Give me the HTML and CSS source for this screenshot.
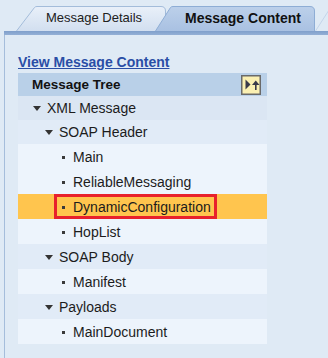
FILE: index.html
```html
<!DOCTYPE html>
<html>
<head>
<meta charset="utf-8">
<link rel="stylesheet" href="styles.css">
</head>
<body>
<div class="tabs">
  <div class="tab tab-details">
    <svg class="tab-bg" width="150" height="25" viewBox="0 0 150 25">
      <defs>
        <linearGradient id="gd" x1="0" y1="0" x2="0" y2="1">
          <stop offset="0" stop-color="#e9f0f9"/>
          <stop offset="1" stop-color="#d2dff0"/>
        </linearGradient>
      </defs>
      <path d="M0.5,25 L18.5,1.5 Q19.3,0.5 21,0.5 L145,0.5 Q149.5,0.5 149.5,5 L149.5,25" fill="url(#gd)" stroke="#a3bcda" stroke-width="1"/>
    </svg>
    <span class="tab-label">Message Details</span>
  </div>
  <div class="tab tab-content">
    <svg class="tab-bg" width="160" height="25" viewBox="0 0 160 25">
      <defs>
        <linearGradient id="gc" x1="0" y1="0" x2="0" y2="1">
          <stop offset="0" stop-color="#bcd0ea"/>
          <stop offset="1" stop-color="#a9c1e2"/>
        </linearGradient>
      </defs>
      <path d="M0.5,25 L15.5,1.5 Q16.3,0.5 18,0.5 L155,0.5 Q159.5,0.5 159.5,5 L159.5,25" fill="url(#gc)" stroke="#8eadd5" stroke-width="1"/>
    </svg>
    <span class="tab-label">Message Content</span>
  </div>
  <div class="tab tab-more">
    <svg class="tab-bg" width="20" height="25" viewBox="0 0 20 25">
      <path d="M0.5,25 L14,4 L20,4" fill="none" stroke="#c3d4ea" stroke-width="1"/>
    </svg>
  </div>
</div>
<div class="tabbar"></div>
<div class="panel">
  <a class="view-link" href="#">View Message Content</a>
  <div class="tree">
    <div class="tree-head">
      <span class="head-title">Message Tree</span>
      <span class="head-btn">
        <svg width="20" height="20" viewBox="0 0 20 20">
          <rect x="0.75" y="0.75" width="18.5" height="18.5" fill="#fbf0b2" stroke="#6a6a6a" stroke-width="1.5"/>
          <polygon points="4.5,4.5 9.5,9.5 4.5,14.5" fill="#3a3a4a"/>
          <polygon points="11,10 14.75,5.5 18.5,10" fill="#3a3a4a"/>
          <rect x="14" y="9" width="1.6" height="6" fill="#3a3a4a"/>
        </svg>
      </span>
    </div>
    <div class="row folder lvl0"><span class="tri"></span><span class="txt">XML Message</span></div>
    <div class="row folder lvl1 short"><span class="tri"></span><span class="txt">SOAP Header</span></div>
    <div class="row leaf"><span class="lbl"><span class="dot"></span><span class="txt">Main</span></span></div>
    <div class="row leaf"><span class="lbl"><span class="dot"></span><span class="txt">ReliableMessaging</span></span></div>
    <div class="row leaf selected"><span class="lbl marked"><span class="dot"></span><span class="txt">DynamicConfiguration</span></span></div>
    <div class="row leaf"><span class="lbl"><span class="dot"></span><span class="txt">HopList</span></span></div>
    <div class="row folder lvl1"><span class="tri"></span><span class="txt">SOAP Body</span></div>
    <div class="row leaf"><span class="lbl"><span class="dot"></span><span class="txt">Manifest</span></span></div>
    <div class="row folder lvl1"><span class="tri"></span><span class="txt">Payloads</span></div>
    <div class="row leaf"><span class="lbl"><span class="dot"></span><span class="txt">MainDocument</span></span></div>
  </div>
</div>
</body>
</html>
```

FILE: styles.css
```css
html, body {
  margin: 0;
  padding: 0;
}
body {
  width: 328px;
  height: 358px;
  overflow: hidden;
  background: #dfeaf5;
  font-family: "Liberation Sans", Arial, sans-serif;
  color: #1c1c1c;
}
.tabs {
  display: flex;
  padding-left: 16px;
  padding-top: 6px;
  height: 25px;
}
.tab {
  position: relative;
  height: 25px;
  flex: none;
}
.tab-bg {
  position: absolute;
  left: 0;
  top: 0;
  display: block;
}
.tab-label {
  position: relative;
  display: block;
  line-height: 24px;
  white-space: nowrap;
}
.tab-details {
  width: 150px;
  font-size: 13px;
  color: #202020;
}
.tab-details .tab-label {
  padding-left: 30px;
}
.tab-content {
  width: 160px;
  margin-left: -11px;
  font-size: 14px;
  font-weight: bold;
  color: #111;
}
.tab-content .tab-label {
  padding-left: 30px;
}
.tab-more {
  width: 20px;
  margin-left: 0;
}
.tabbar {
  margin-left: 4px;
  height: 4px;
  background: linear-gradient(#7f9fcb, #94b0d6);
}
.panel {
  margin-left: 4px;
  border-left: 1px solid #a5bddb;
  padding: 19px 0 0 13px;
  height: 304px;
  background: #dfeaf5;
}
.view-link {
  display: block;
  font-size: 14px;
  font-weight: bold;
  line-height: 16px;
  color: #2a4ea6;
  text-decoration: underline;
  width: max-content;
}
.tree {
  margin-top: 3px;
  width: 249px;
}
.tree-head {
  height: 23px;
  display: flex;
  align-items: center;
  justify-content: space-between;
  padding: 0 6px 0 14px;
  background: #b9d0e8;
}
.head-title {
  font-size: 13.5px;
  font-weight: bold;
  color: #111;
}
.head-btn {
  display: flex;
  width: 20px;
  height: 20px;
}
.head-btn svg {
  display: block;
}
.row {
  display: flex;
  align-items: center;
  height: 25px;
  font-size: 14px;
}
.row.lvl0 {
  height: 24px;
  background: #dbe6f3;
  padding-left: 15px;
}
.row.lvl1 {
  background: #e1ebf7;
  padding-left: 27px;
}
.row.lvl1.short {
  height: 24px;
}
.tri {
  width: 0;
  height: 0;
  border-left: 4.5px solid transparent;
  border-right: 4.5px solid transparent;
  border-top: 5px solid #333;
  margin-right: 6px;
  margin-top: 1px;
}
.row.leaf {
  background: #edf4fc;
  padding-left: 36px;
}
.row.selected {
  background: #ffc54e;
}
.lbl {
  display: flex;
  align-items: center;
  height: 25px;
  box-sizing: border-box;
  border: 3px solid transparent;
  padding: 0 3px 0 5px;
}
.lbl.marked {
  border-color: #e8212c;
}
.dot {
  width: 3px;
  height: 3px;
  background: #3a3a3a;
  margin-right: 8px;
  margin-top: 1px;
}
.txt {
  white-space: nowrap;
}
```
